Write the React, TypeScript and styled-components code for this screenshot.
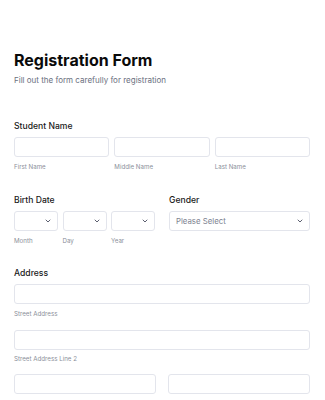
import React from "react";
import styled, { createGlobalStyle } from "styled-components";

const Global = createGlobalStyle`
  html, body { margin: 0; padding: 0; background: #fff; }
  body { font-family: Inter, "Noto Sans", sans-serif; color: #0a0a0a; }
`;

const Page = styled.div`
  padding: 50px 15px 0 14px;
  display: flex;
  flex-direction: column;
`;

const Title = styled.h1`
  margin: 0;
  font-size: 16px;
  font-weight: 700;
  line-height: 21px;
  color: #0a0a0a;
`;

const Subtitle = styled.p`
  margin: 2.5px 0 0;
  font-size: 8px;
  line-height: 12px;
  color: #6b7080;
`;

const Section = styled.div<{ $top: number }>`
  margin-top: ${(p) => p.$top}px;
  display: flex;
  flex-direction: column;
`;

const Label = styled.div`
  font-size: 8.6px;
  font-weight: 500;
  line-height: 12px;
  color: #1a1a1a;
  margin-bottom: 5px;
`;

const Row = styled.div<{ $cols: string; $gap: number }>`
  display: grid;
  grid-template-columns: ${(p) => p.$cols};
  column-gap: ${(p) => p.$gap}px;
`;

const Field = styled.div`
  display: flex;
  flex-direction: column;
`;

const Box = styled.div`
  height: 20px;
  box-sizing: border-box;
  border: 1px solid #e3e5ec;
  border-radius: 3px;
  background: #fff;
  display: flex;
  align-items: center;
  justify-content: space-between;
  padding: 0 6px 0 6px;
`;

const Hint = styled.div`
  margin-top: 4.5px;
  font-size: 6.2px;
  line-height: 9px;
  color: #8b8f9a;
`;

const Placeholder = styled.span`
  font-size: 7.8px;
  color: #7d8290;
`;

const Chevron = () => (
  <svg width="6" height="4" viewBox="0 0 6 4" fill="none">
    <path d="M1 1 L3 3 L5 1" stroke="#5c6070" strokeWidth="1" strokeLinecap="round" strokeLinejoin="round" />
  </svg>
);

const Columns = styled.div`
  display: grid;
  grid-template-columns: 141px 141px;
  column-gap: 14px;
`;

export default function App() {
  return (
    <>
      <Global />
      <Page>
        <Title>Registration Form</Title>
        <Subtitle>Fill out the form carefully for registration</Subtitle>

        <Section $top={34.5}>
          <Label>Student Name</Label>
          <Row $cols="1fr 1fr 1fr" $gap={5}>
            <Field><Box /><Hint>First Name</Hint></Field>
            <Field><Box /><Hint>Middle Name</Hint></Field>
            <Field><Box /><Hint>Last Name</Hint></Field>
          </Row>
        </Section>

        <Section $top={23.5}>
          <Columns>
            <Field>
              <Label>Birth Date</Label>
              <Row $cols="44px 44px 44px" $gap={4.5}>
                <Field><Box><span /><Chevron /></Box><Hint>Month</Hint></Field>
                <Field><Box><span /><Chevron /></Box><Hint>Day</Hint></Field>
                <Field><Box><span /><Chevron /></Box><Hint>Year</Hint></Field>
              </Row>
            </Field>
            <Field>
              <Label>Gender</Label>
              <Box><Placeholder>Please Select</Placeholder><Chevron /></Box>
            </Field>
          </Columns>
        </Section>

        <Section $top={22.5}>
          <Label>Address</Label>
          <Field><Box /><Hint>Street Address</Hint></Field>
          <Section $top={12}>
            <Field><Box /><Hint>Street Address Line 2</Hint></Field>
          </Section>
          <Section $top={11}>
            <Row $cols="142px 142px" $gap={12}>
              <Field><Box /></Field>
              <Field><Box /></Field>
            </Row>
          </Section>
        </Section>
      </Page>
    </>
  );
}
